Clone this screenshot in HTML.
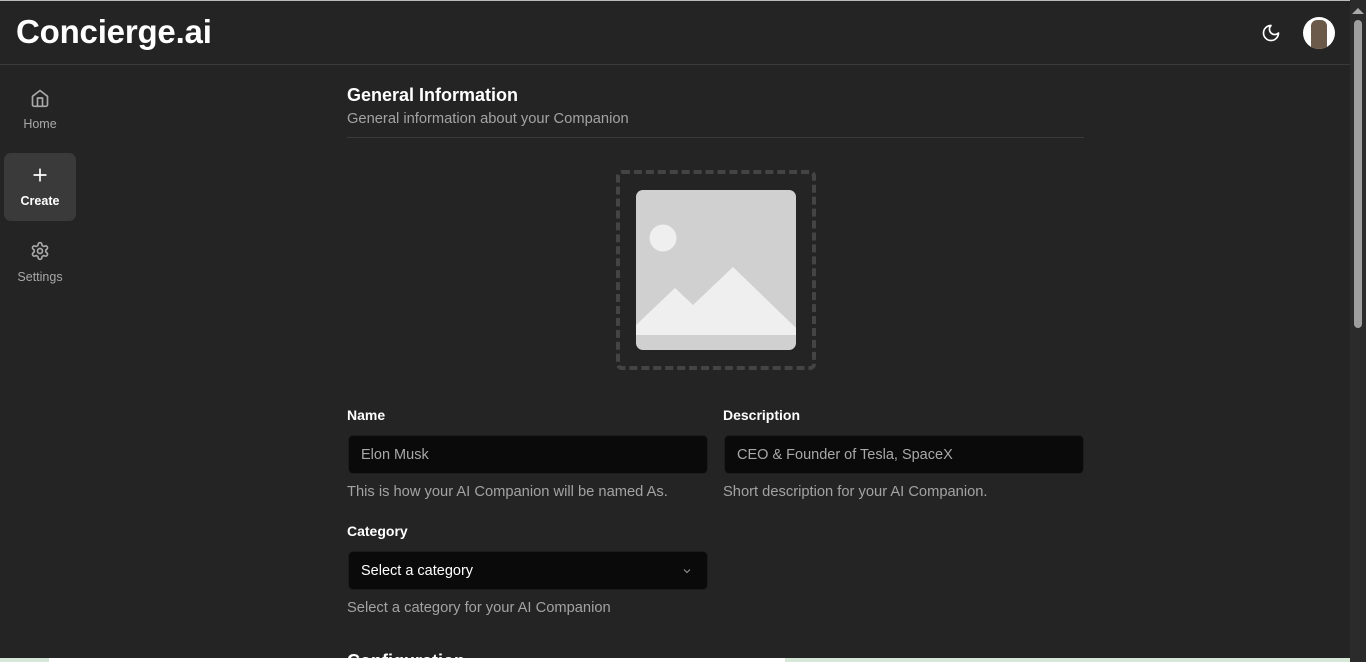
<!DOCTYPE html>
<html style="overflow:hidden;height:662px"><head><style>
*{margin:0;padding:0;box-sizing:border-box}
body{width:1366px;height:662px;overflow:hidden;background:#242424;font-family:"Liberation Sans",sans-serif;color:#fff;position:relative}
.top{position:absolute;left:0;top:0;width:1350px;height:65px;border-bottom:1px solid #3a3a3a;border-top:1px solid #bbb}
.logo{position:absolute;left:16px;top:12px;font-size:33px;font-weight:bold;letter-spacing:-0.2px}
.nav{position:absolute;left:4px;width:72px;text-align:center;font-size:12.5px;color:#a8a8a8;border-radius:7px}
.nav svg{display:block;margin:0 auto 9px}
.sec{position:absolute;left:347px}
.lbl{font-size:14px;font-weight:bold}
.inp{position:absolute;width:360px;height:39px;background:#0a0a0a;border:1px solid #1c1c1c;border-radius:5px;font-size:14.5px;padding:11px 12px;color:#a8a8a8}
.help{font-size:14.7px;color:#a3a3a3}
</style></head><body>
<div class="top">
<div class="logo">Concierge.ai</div>
<svg style="position:absolute;left:1261px;top:22px" width="20" height="20" viewBox="0 0 24 24" fill="none" stroke="#fff" stroke-width="2" stroke-linecap="round" stroke-linejoin="round"><path d="M12 3a6 6 0 0 0 9 9 9 9 0 1 1-9-9Z"/></svg>
<div style="position:absolute;left:1303px;top:16px;width:32px;height:32px;border-radius:50%;background:#fff;overflow:hidden"><div style="margin:3px auto 0;width:16px;height:29px;background:#6b5a4a;border-radius:6px 6px 0 0"></div></div>
</div>
<div style="position:absolute;left:1350px;top:0;width:16px;height:662px;background:#2b2b2b"></div>
<div style="position:absolute;left:1354px;top:20px;width:8px;height:308px;background:#9e9e9e;border-radius:4px"></div>
<div style="position:absolute;left:1352px;top:8px;width:0;height:0;border-left:6px solid transparent;border-right:6px solid transparent;border-bottom:6px solid #aaa"></div>

<div class="nav" style="top:88px;height:56px">
<svg width="20" height="20" viewBox="0 0 24 24" fill="none" stroke="#a8a8a8" stroke-width="2" stroke-linecap="round" stroke-linejoin="round"><path d="M3 10 12 3l9 7v10a2 2 0 0 1-2 2H5a2 2 0 0 1-2-2Z"/><path d="M9 22V12h6v10"/></svg>Home</div>
<div class="nav" style="top:153px;height:68px;background:#3a3a3a;color:#fff;font-weight:bold;padding-top:12px">
<svg width="20" height="20" viewBox="0 0 24 24" fill="none" stroke="#fff" stroke-width="2" stroke-linecap="round"><path d="M12 5v14M5 12h14"/></svg>Create</div>
<div class="nav" style="top:241px;height:56px">
<svg width="20" height="20" viewBox="0 0 24 24" fill="none" stroke="#a8a8a8" stroke-width="2" stroke-linecap="round" stroke-linejoin="round"><path d="M12.22 2h-.44a2 2 0 0 0-2 2v.18a2 2 0 0 1-1 1.73l-.43.25a2 2 0 0 1-2 0l-.15-.08a2 2 0 0 0-2.730.73l-.22.38a2 2 0 0 0 .73 2.730l.15.1a2 2 0 0 1 1 1.72v.51a2 2 0 0 1-1 1.74l-.15.09a2 2 0 0 0-.73 2.73l.22.38a2 2 0 0 0 2.73.73l.15-.08a2 2 0 0 1 2 0l.43.25a2 2 0 0 1 1 1.73V20a2 2 0 0 0 2 2h.44a2 2 0 0 0 2-2v-.18a2 2 0 0 1 1-1.73l.43-.25a2 2 0 0 1 2 0l.15.08a2 2 0 0 0 2.73-.73l.22-.39a2 2 0 0 0-.73-2.73l-.15-.08a2 2 0 0 1-1-1.74v-.5a2 2 0 0 1 1-1.74l.15-.09a2 2 0 0 0 .73-2.730l-.22-.38a2 2 0 0 0-2.73-.73l-.15.08a2 2 0 0 1-2 0l-.43-.25a2 2 0 0 1-1-1.73V4a2 2 0 0 0-2-2z"/><circle cx="12" cy="12" r="3"/></svg>Settings</div>

<div class="sec" style="top:85px;font-size:18px;font-weight:bold">General Information</div>
<div class="sec help" style="top:111px">General information about your Companion</div>
<div style="position:absolute;left:347px;top:137px;width:737px;height:1px;background:#3a3a3a"></div>

<div style="position:absolute;left:616px;top:170px;width:200px;height:200px;border:4px dashed #444;border-radius:6px"></div>
<svg style="position:absolute;left:636px;top:190px" width="160" height="160" viewBox="0 0 160 160"><defs><clipPath id="c"><rect width="160" height="160" rx="7"/></clipPath></defs><g clip-path="url(#c)"><rect width="160" height="160" fill="#d0d0d0"/><circle cx="27" cy="48" r="13.5" fill="#efefef"/><path d="M0 135L39 98 57 115 97 77 160 138V145H0Z" fill="#efefef"/></g></svg>

<div class="sec lbl" style="top:407px">Name</div>
<div class="inp" style="left:348px;top:435px">Elon Musk</div>
<div class="sec help" style="top:484px">This is how your AI Companion will be named As.</div>
<div class="lbl" style="position:absolute;left:723px;top:407px">Description</div>
<div class="inp" style="left:724px;top:435px">CEO &amp; Founder of Tesla, SpaceX</div>
<div class="help" style="position:absolute;left:723px;top:484px">Short description for your AI Companion.</div>

<div class="sec lbl" style="top:523px">Category</div>
<div class="inp" style="left:348px;top:551px;color:#fff">Select a category
<svg style="position:absolute;right:14px;top:13px" width="12" height="12" viewBox="0 0 24 24" fill="none" stroke="#999" stroke-width="2"><path d="m6 9 6 6 6-6"/></svg></div>
<div class="sec help" style="top:600px">Select a category for your AI Companion</div>
<div class="sec lbl" style="top:651px;font-size:18px;height:7px;overflow:hidden">Configuration</div>
<div style="position:absolute;left:0;top:658px;width:1350px;height:4px;background:#d8e8d8"></div>
<div style="position:absolute;left:49px;top:658px;width:736px;height:4px;background:#fff"></div>
</body></html>
